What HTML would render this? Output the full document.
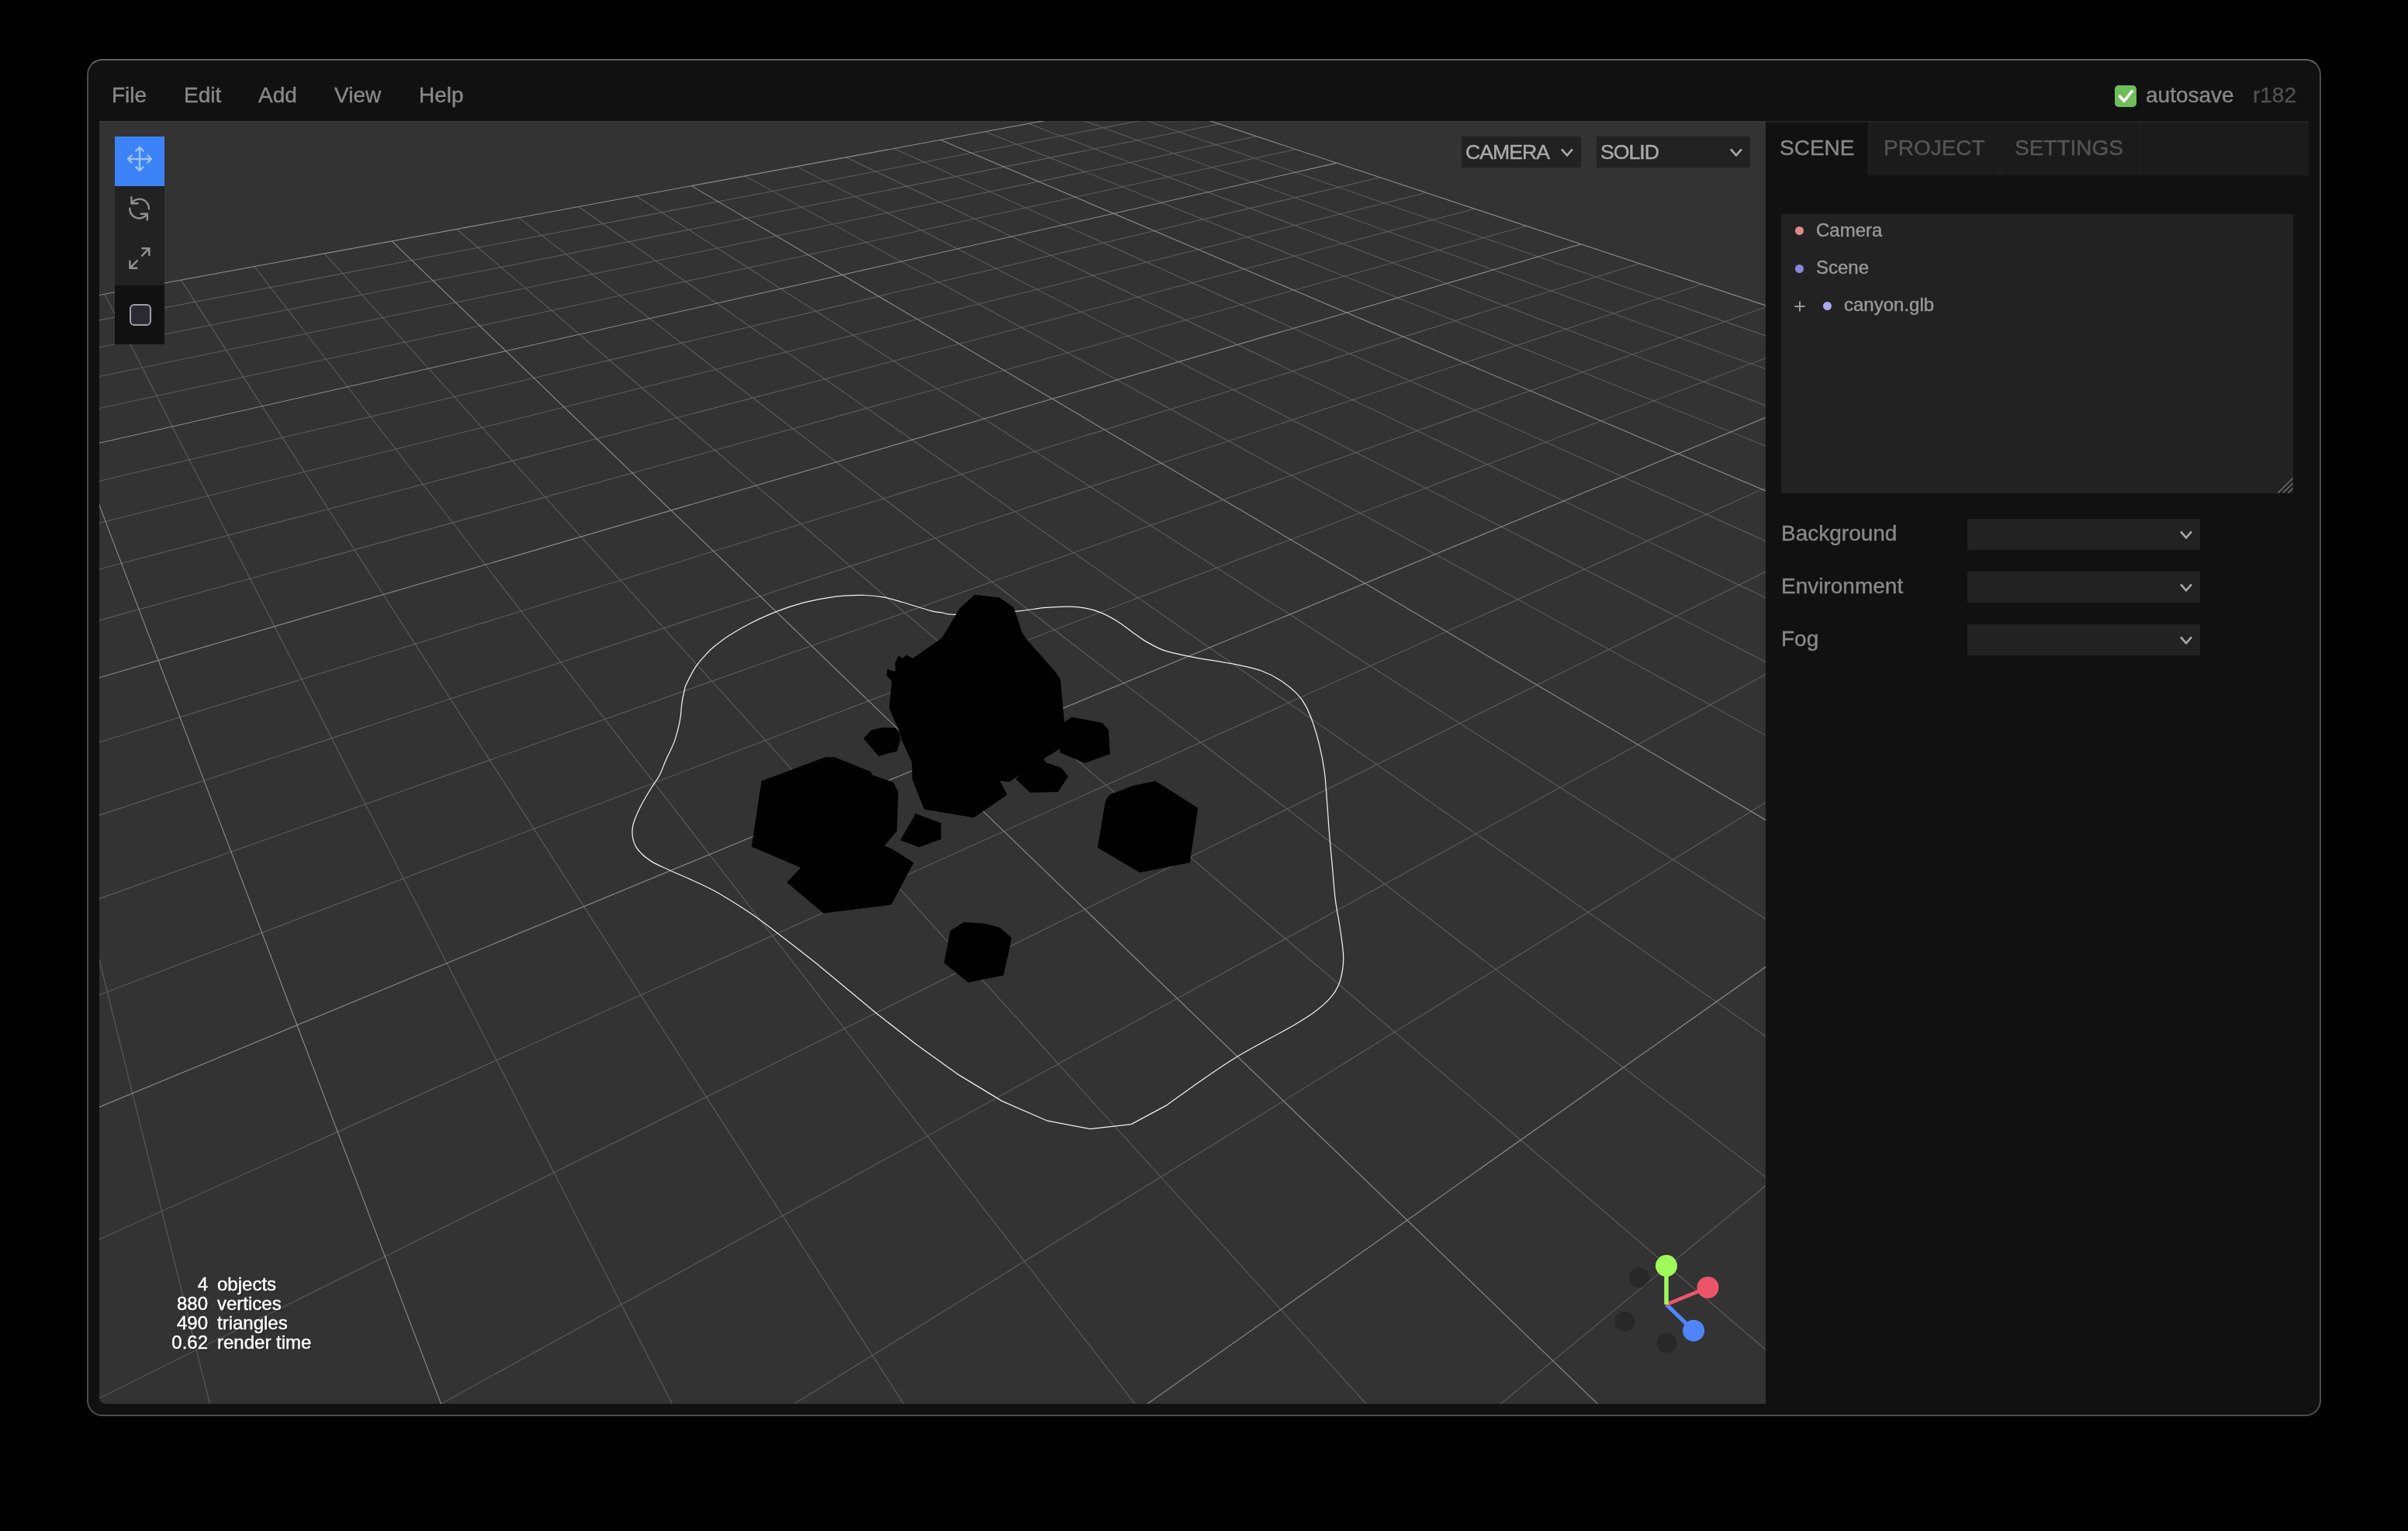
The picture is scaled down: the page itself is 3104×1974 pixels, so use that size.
<!DOCTYPE html>
<html><head><meta charset="utf-8"><title>three.js editor</title>
<style>
*{box-sizing:border-box}
html,body{margin:0;padding:0}
body{width:3104px;height:1974px;background:#000;overflow:hidden;position:relative;font-family:"Liberation Sans",sans-serif;font-size:28px;color:#888}
#win{position:absolute;left:112px;top:76px;width:2880px;height:1750px;border:2px solid #4c4c4c;border-top-color:#626262;border-radius:20px;background:#111}
#app{will-change:transform;-webkit-text-stroke:0.4px;position:absolute;left:128px;top:92px;width:2848px;height:1718px;background:#111;border-radius:0 0 8px 8px;overflow:hidden}
.abs{position:absolute}
.mt{position:absolute;top:15px;line-height:32px;height:32px;color:#888;white-space:nowrap}
#viewport{position:absolute;left:0;top:64px;width:2148px;height:1654px;background:#333;overflow:hidden}
#sidebar{position:absolute;left:2148px;top:64px;width:700px;height:1654px;background:#111}
.sel{position:absolute;height:40px;background:#222;color:#aaa;font-size:26.67px;line-height:40px;letter-spacing:-1px;white-space:nowrap}
.sel span{position:absolute;left:5px;top:0}
.tab{position:absolute;top:2px;height:68px;line-height:32px;padding-top:17px;color:#555;border-right:2px solid #202020;white-space:nowrap}
.row{position:absolute;left:0;width:660px;height:48px;font-size:24px;color:#999;white-space:nowrap}
.dot{position:absolute;width:11px;height:11px;border-radius:50%}
.lbl{position:absolute;left:20px;color:#888;line-height:32px;white-space:nowrap}
#info{position:absolute;color:#fff;font-size:24px;line-height:25px;text-shadow:2px 2px 0 rgba(0,0,0,0.25);white-space:nowrap}
#info div{position:absolute;height:25px}
</style></head><body>
<div id="win"></div>
<div id="app">
 <div id="menubar" class="abs" style="left:0;top:0;width:2848px;height:64px;background:#111">
  <span class="mt" style="left:16px">File</span>
  <span class="mt" style="left:109px">Edit</span>
  <span class="mt" style="left:205px">Add</span>
  <span class="mt" style="left:303px">View</span>
  <span class="mt" style="left:412px">Help</span>
  <div class="abs" style="left:2598px;top:18px;width:28px;height:28px;border-radius:5px;background:#6fbd5b">
   <svg width="28" height="28" viewBox="0 0 28 28" style="position:absolute;left:0;top:0"><path d="M6.4 14L12 20.4L22.3 7.5" fill="none" stroke="#fff" stroke-width="3.6" stroke-linecap="round" stroke-linejoin="round"/></svg>
  </div>
  <span class="mt" style="left:2638px">autosave</span>
  <span class="mt" style="right:16px;color:#505050">r182</span>
 </div>
 <div id="viewport">
  <div class="abs" style="left:0;top:0;width:2148px;height:2px;background:#383838"></div>
<svg width="2148" height="1654" viewBox="128 156 2148 1654" style="position:absolute;left:0;top:0;display:block">
<path d="M122.0 414.0L1498.9 150.0M122.0 448.9L1572.0 159.8M122.0 486.7L1619.8 175.7M122.0 527.8L1670.1 192.5M122.0 621.7L1779.1 228.7M122.0 675.7L1838.3 248.4M122.0 735.3L1901.0 269.2M122.0 1213.6L271.9 1816.0M122.0 801.5L1967.4 291.3M134.9 379.3L869.6 1816.0M122.0 958.8L2113.2 339.8M233.5 361.1L1168.6 1816.0M122.0 1053.1L2193.4 366.4M327.9 343.6L1467.5 1816.0M122.0 1160.8L2279.0 394.9M418.4 326.9L1766.5 1816.0M122.0 1285.0L2282.0 459.4M588.6 295.5L2282.0 1745.4M122.0 1600.7L2282.0 626.0M668.7 280.7L2282.0 1522.3M122.0 1805.7L2282.0 734.1M745.7 266.5L2282.0 1340.3M557.7 1816.0L2282.0 866.1M819.9 252.8L2282.0 1188.8M1014.1 1816.0L2282.0 1030.9M960.1 226.9L2282.0 951.3M1927.2 1816.0L2282.0 1523.8M1026.5 214.6L2282.0 856.4M1090.6 202.8L2282.0 773.5M1152.4 191.4L2282.0 700.4M1270.0 169.7L2282.0 577.4M1325.9 159.4L2282.0 525.2M1381.7 150.0L2282.0 478.0M1462.0 150.0L2282.0 435.0" fill="none" stroke="#5e5e5e" stroke-width="1.05"/>
<path d="M122.0 381.6L1376.6 150.0M122.0 572.6L1723.1 210.1M122.0 635.4L570.8 1816.0M122.0 875.5L2038.0 314.8M505.2 310.9L2065.5 1816.0M122.0 1429.8L2282.0 535.8M891.3 239.6L2282.0 1060.8M1470.6 1816.0L2282.0 1242.5M1212.2 180.3L2282.0 635.5M1542.3 150.0L2282.0 395.9" fill="none" stroke="#8c8c8c" stroke-width="1.1"/>
<path d="M858.6 979.5C861.7 972.4 866.1 964.5 868.8 957.4C871.5 950.3 873.3 942.7 874.7 937.0C876.2 931.4 876.6 928.5 877.3 923.4C878.0 918.3 878.1 912.1 879.0 906.5C879.8 900.8 881.5 893.4 882.4 889.5C883.3 885.5 882.0 887.6 884.4 882.7C886.8 877.7 892.8 866.0 896.8 859.7C900.9 853.5 905.0 849.4 908.7 845.3C912.4 841.2 913.8 839.4 918.9 835.1C924.0 830.9 931.5 824.9 939.3 819.8C947.1 814.7 955.3 809.8 965.6 804.5C975.9 799.3 989.8 792.9 1001.3 788.4C1012.7 783.9 1023.8 780.3 1034.4 777.4C1045.0 774.5 1055.9 772.6 1065.0 771.1C1074.0 769.6 1080.3 768.8 1088.7 768.2C1097.2 767.6 1107.4 767.2 1115.9 767.5C1124.4 767.9 1131.8 768.7 1139.7 770.2C1147.6 771.7 1153.4 773.6 1163.5 776.5C1173.5 779.4 1191.5 785.4 1200.0 787.6C1208.5 789.8 1208.7 789.0 1214.2 789.8C1219.7 790.6 1217.3 792.5 1232.9 792.3C1248.4 792.1 1288.9 789.9 1307.6 788.4C1326.3 787.0 1333.4 784.7 1345.0 783.7C1356.6 782.6 1368.2 782.0 1377.2 782.1C1386.3 782.2 1392.2 782.8 1399.3 784.2C1406.4 785.5 1412.6 787.1 1419.7 790.1C1426.8 793.1 1434.4 797.3 1441.8 802.0C1449.1 806.7 1458.1 814.0 1463.9 818.1C1469.6 822.2 1470.3 823.1 1476.4 826.6C1482.6 830.0 1490.9 835.3 1500.7 838.7C1510.5 842.1 1519.6 843.8 1535.1 846.8C1550.7 849.8 1578.7 853.9 1593.8 856.9C1609.0 860.0 1616.8 861.6 1626.2 865.0C1635.7 868.4 1643.1 872.4 1650.5 877.2C1657.9 881.9 1665.4 888.0 1670.8 893.4C1676.2 898.8 1679.2 902.8 1682.9 909.6C1686.6 916.3 1690.0 925.1 1693.0 933.8C1696.1 942.6 1698.8 952.1 1701.1 962.2C1703.5 972.3 1705.7 983.1 1707.2 994.6C1708.8 1006.0 1709.4 1018.2 1710.4 1031.0C1711.5 1043.8 1712.1 1057.3 1713.3 1071.5C1714.4 1085.7 1716.0 1101.2 1717.3 1116.0C1718.7 1130.9 1719.7 1147.1 1721.4 1160.6C1723.1 1174.1 1725.8 1185.5 1727.4 1197.0C1729.1 1208.5 1731.0 1220.6 1731.5 1229.4C1732.0 1238.2 1731.7 1242.9 1730.7 1249.6C1729.7 1256.4 1728.0 1263.8 1725.4 1269.9C1722.9 1276.0 1720.4 1280.3 1715.3 1286.1C1710.2 1291.8 1703.2 1298.2 1695.1 1304.3C1687.0 1310.4 1683.6 1312.7 1666.7 1322.5C1649.9 1332.3 1615.5 1349.9 1593.8 1363.0C1572.2 1376.1 1552.0 1390.9 1537.0 1401.2L1503.8 1425.1L1458.1 1449.6L1405.1 1455.6L1349.1 1444.8L1292.0 1419.9L1233.8 1384.6L1181.9 1347.2L1130.0 1306.7L1054.8 1244.2C1032.7 1226.3 1012.3 1210.9 997.5 1199.6C982.6 1188.3 979.1 1185.1 965.6 1176.2C952.2 1167.4 933.6 1155.4 916.8 1146.5C900.0 1137.6 877.7 1128.7 864.8 1122.7C851.8 1116.7 846.4 1114.9 839.3 1110.4C832.2 1105.9 826.2 1100.3 822.3 1095.5C818.4 1090.8 817.1 1086.3 815.9 1081.7C814.8 1077.1 814.9 1072.0 815.3 1067.9C815.6 1063.9 816.3 1061.9 818.0 1057.3C819.7 1052.7 822.1 1046.9 825.5 1040.3C828.8 1033.8 834.1 1024.8 838.2 1018.0C842.3 1011.3 846.5 1006.4 849.9 1000.0C853.3 993.6 855.4 986.6 858.6 979.5Z" fill="none" stroke="#f0f0f0" stroke-width="1.25" stroke-linejoin="round"/>
<path d="M1256.6 766.8L1288.1 770.6L1306.8 783.3L1317.8 816.4L1324.6 825.8L1358.6 864.0L1367.0 875.9L1368.7 896.3L1371.8 928.5L1371.5 931.4L1366.4 965.4L1345.1 978.5L1314.6 999.0L1301.0 1007.9L1288.7 1006.7L1298.4 1024.8L1255.1 1054.2L1191.4 1043.5L1176.1 1005.3L1175.3 982.4L1161.7 952.7L1175.1 979.5L1161.5 952.3L1159.0 942.1L1146.2 913.2L1149.6 878.4L1142.8 870.8L1143.7 862.6L1152.2 865.7L1154.7 864.0L1153.4 855.5L1158.5 845.3L1163.2 848.7L1168.3 844.5L1176.8 848.7L1214.2 822.4L1237.1 784.2ZM1371.5 931.4L1381.7 924.6L1420.7 931.9L1428.9 940.8L1430.9 972.2L1398.6 983.7L1366.4 970.5L1366.4 965.4ZM1345.1 978.5L1348.5 983.2L1368.1 990.0L1377.1 1001.1L1363.8 1020.9L1328.2 1022.0L1309.5 1004.5L1314.6 999.0ZM1113.1 952.3L1123.3 941.3L1138.6 937.9L1154.7 938.7L1159.0 943.8L1160.7 954.0L1156.4 968.5L1132.7 974.9ZM981.6 1006.9L1064.0 976.3L1075.9 976.3L1122.6 995.0L1124.3 999.3L1151.5 1008.6L1157.9 1021.3L1156.1 1071.4L1140.1 1090.6L1149.8 1094.4L1177.8 1112.2L1148.9 1166.6L1061.4 1177.6L1014.2 1137.7L1032.2 1118.7L968.9 1091.8ZM1180.3 1049.0L1213.1 1061.3L1213.1 1082.1L1184.6 1092.3L1160.5 1083.3ZM1430.1 1024.8L1460.6 1013.0L1489.5 1007.0L1544.2 1041.8L1533.7 1112.3L1469.1 1125.1L1414.8 1092.8L1425.0 1032.5ZM1242.4 1188.9L1268.3 1190.6L1289.1 1196.1L1303.6 1208.8L1301.9 1221.1L1293.4 1257.7L1247.9 1266.8L1216.9 1241.5L1225.0 1199.9Z" fill="#000"/>
<g>
<circle cx="2113.2" cy="1647.5" r="13" fill="#000" fill-opacity="0.2"/>
<circle cx="2094.5" cy="1703.8" r="13" fill="#000" fill-opacity="0.2"/>
<circle cx="2148.4" cy="1731.5" r="13" fill="#000" fill-opacity="0.2"/>
<path d="M2148 1682L2183.1 1715.7" stroke="#5085f9" stroke-width="5.2"/>
<path d="M2148 1682L2201.5 1660" stroke="#ec5569" stroke-width="4.6"/>
<path d="M2148 1682L2148 1632" stroke="#a0f95b" stroke-width="5.5"/>
<circle cx="2183.1" cy="1715.7" r="14" fill="#5085f9"/>
<circle cx="2201.5" cy="1660" r="14" fill="#ec5569"/>
<circle cx="2148" cy="1632.1" r="14" fill="#a0f95b"/>
</g></svg>
  <div id="toolbar" class="abs" style="left:20px;top:20px;width:64px;height:268px;background:#111">
   <div class="abs" style="left:0;top:0;width:64px;height:64px;background:#3c83f7"></div>
   <div class="abs" style="left:0;top:64px;width:64px;height:128px;background:#222"></div>
   <svg width="64" height="268" viewBox="148 176 64 268" style="position:absolute;left:0;top:0" fill="none" stroke-width="2.4" stroke-linecap="round" stroke-linejoin="round">
    <g stroke="#9fc3fb" stroke-width="2.3"><path d="M180 190V220M165 205H195M175.4 194.6L180 190L184.6 194.6M175.4 215.4L180 220L184.6 215.4M169.6 200.4L165 205L169.6 209.6M190.4 200.4L195 205L190.4 209.6"/></g>
    <g stroke="#919191"><path d="M169.4 254.2V262.2H177.6M169.4 262.2A12.3 12.3 0 0 1 192 269.4M189.9 283.5V275.7H181.8M189.9 275.7A12.3 12.3 0 0 1 167.2 268.6"/>
    <path d="M183.6 320.2H192.4V329M192.4 320.2L183 329.8M167.4 336.8V345.7H176.4M167.4 345.7L176.9 336.2"/></g>
   </svg>
   <div class="abs" style="left:19px;top:216px;width:28px;height:28px;border:2px solid #9e9ea8;border-radius:6px;background:#2b2a33"></div>
  </div>
  <div class="sel" style="left:1756px;top:20px;width:154px"><span>CAMERA</span>
   <svg width="20" height="14" viewBox="0 0 20 14" style="position:absolute;left:126px;top:14px"><path d="M3 2.4L10 10.4L17 2.4" fill="none" stroke="#aaa" stroke-width="2.6"/></svg></div>
  <div class="sel" style="left:1930px;top:20px;width:198px"><span>SOLID</span>
   <svg width="20" height="14" viewBox="0 0 20 14" style="position:absolute;left:170px;top:14px"><path d="M3 2.4L10 10.4L17 2.4" fill="none" stroke="#aaa" stroke-width="2.6"/></svg></div>
  <div id="info" style="left:0;top:0">
   <div style="right:-140px;top:1487px;text-align:right">4</div><div style="left:152px;top:1487px">objects</div>
   <div style="right:-140px;top:1512px;text-align:right">880</div><div style="left:152px;top:1512px">vertices</div>
   <div style="right:-140px;top:1537px;text-align:right">490</div><div style="left:152px;top:1537px">triangles</div>
   <div style="right:-140px;top:1562px;text-align:right">0.62</div><div style="left:152px;top:1562px">render time</div>
  </div>
 </div>
 <div id="sidebar">
  <div class="abs" style="left:0;top:0;width:700px;height:70px;background:#1b1b1b;border-top:2px solid #222"></div>
  <div class="tab" style="left:0;width:134px;padding-left:18px;background:#111;color:#888">SCENE</div>
  <div class="tab" style="left:134px;width:169px;padding-left:18px">PROJECT</div>
  <div class="tab" style="left:303px;width:181px;padding-left:18px">SETTINGS</div>
  <div id="outliner" class="abs" style="left:20px;top:120px;width:660px;height:360px;background:#222;overflow:hidden">
   <div class="row" style="top:0"><span class="dot" style="left:18px;top:16px;background:#dd8888"></span><span class="abs" style="left:45px;top:5px;line-height:32px">Camera</span></div>
   <div class="row" style="top:48px"><span class="dot" style="left:18px;top:17px;background:#8888dd"></span><span class="abs" style="left:45px;top:5px;line-height:32px">Scene</span></div>
   <div class="row" style="top:96px"><svg width="14" height="14" viewBox="0 0 14 14" style="position:absolute;left:17px;top:16px"><path d="M7 0.5V13.5M0.5 7H13.5" stroke="#999" stroke-width="2" fill="none"/></svg><span class="dot" style="left:54px;top:17px;background:#aaaaee"></span><span class="abs" style="left:81px;top:5px;line-height:32px">canyon.glb</span></div>
   <svg width="20" height="20" viewBox="0 0 20 20" style="position:absolute;right:0;bottom:0"><path d="M0.5 19.5L19.5 0.5M7 19.5L19.5 7M13.5 19.5L19.5 13.5" stroke="#777" stroke-width="1.2" fill="none"/></svg>
  </div>
  <div class="lbl" style="top:516px">Background</div>
  <div class="lbl" style="top:584px">Environment</div>
  <div class="lbl" style="top:652px">Fog</div>
  <div class="sel" style="left:260px;top:513px;width:300px"><svg width="20" height="14" viewBox="0 0 20 14" style="position:absolute;left:272px;top:14px"><path d="M3 2.4L10 10.4L17 2.4" fill="none" stroke="#aaa" stroke-width="2.6"/></svg></div>
  <div class="sel" style="left:260px;top:581px;width:300px"><svg width="20" height="14" viewBox="0 0 20 14" style="position:absolute;left:272px;top:14px"><path d="M3 2.4L10 10.4L17 2.4" fill="none" stroke="#aaa" stroke-width="2.6"/></svg></div>
  <div class="sel" style="left:260px;top:649px;width:300px"><svg width="20" height="14" viewBox="0 0 20 14" style="position:absolute;left:272px;top:14px"><path d="M3 2.4L10 10.4L17 2.4" fill="none" stroke="#aaa" stroke-width="2.6"/></svg></div>
 </div>
</div>
</body></html>
